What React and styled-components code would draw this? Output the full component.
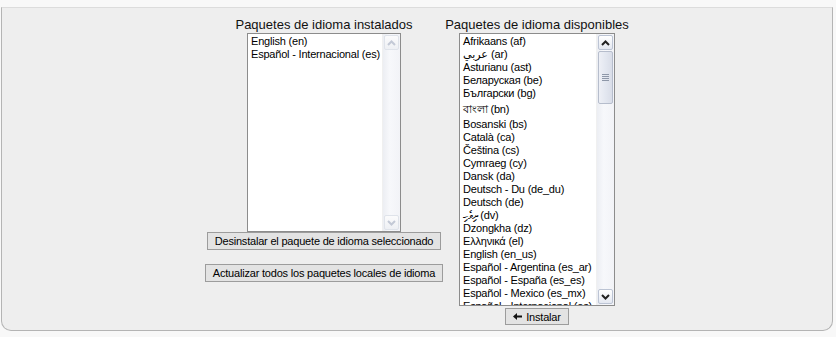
import React from "react";
import styled, { createGlobalStyle } from "styled-components";

const GlobalStyle = createGlobalStyle`
    html, body {
        margin: 0;
        padding: 0;
        background: #f8f8f8;
    }
    body {
        font-family: "Liberation Sans", Arial, "Noto Sans", "DejaVu Sans", sans-serif;
        color: #000;
    }
`

const Page = styled.div`
    padding: 7px 3px 4px 1px;
`

const Panel = styled.div`
    background: #eeeeee;
    border: 1px solid #b4b4b4;
    border-top-color: #dcdcdc;
    border-radius: 0 0 10px 10px;
    height: 324px;
    box-sizing: border-box;
    display: flex;
    justify-content: center;
    align-items: flex-start;
    padding-top: 9px;
`

const Column = styled.div`
    width: ${p => p.$width}px;
    display: flex;
    flex-direction: column;
    align-items: center;
`

const Heading = styled.div`
    font-size: 13px;
    line-height: 16px;
    height: 16px;
    color: #111;
    white-space: nowrap;
`

const ListBox = styled.div`
    width: ${p => p.$width}px;
    height: ${p => p.$height}px;
    box-sizing: border-box;
    border: 1px solid #8c8c8c;
    background: #fff;
    display: flex;
    overflow: hidden;
`

const Items = styled.div`
    flex: 1;
    overflow: hidden;
    padding: 1px 0 0 3px;
`

const Item = styled.div`
    font-size: 11px;
    letter-spacing: -0.2px;
    line-height: ${p => p.$tall ? 18 : 13}px;
    height: ${p => p.$tall ? 18 : 13}px;
    white-space: nowrap;
`

const ScrollBar = styled.div`
    width: 17px;
    flex: none;
    display: flex;
    flex-direction: column;
    background: linear-gradient(to right, #eceef3, #f7f8fb 40%, #f2f3f7);
    border-left: 1px solid #f0f0f0;
`

const ScrollButton = styled.div`
    width: 15px;
    height: 15px;
    margin: 1px 0 1px 1px;
    box-sizing: border-box;
    border: 1px solid ${p => p.$disabled ? "#dfe3ea" : "#bcc4d4"};
    border-radius: 2px;
    background: ${p => p.$disabled
        ? "linear-gradient(#fbfbfc, #eef0f4)"
        : "linear-gradient(#ffffff, #e4e8f1)"};
    display: flex;
    align-items: center;
    justify-content: center;
`

const Track = styled.div`
    flex: 1;
`

const Thumb = styled.div`
    width: 15px;
    margin: ${p => p.$top}px 0 0 1px;
    height: ${p => p.$height}px;
    box-sizing: border-box;
    border: 1px solid #b6bdcc;
    border-radius: 2px;
    background: linear-gradient(to right, #eef0f6, #e3e7f0 50%, #d9dde8);
    display: flex;
    align-items: center;
    justify-content: center;
`

const Grip = styled.div`
    width: 7px;
    height: 7px;
    background: repeating-linear-gradient(#8e97a8 0 1px, transparent 1px 2px);
`

const Button = styled.button`
    font-family: inherit;
    font-size: 11px;
    letter-spacing: -0.2px;
    color: #000;
    background: #e3e3e3;
    border: 1px solid #9c9c9c;
    border-radius: 0;
    padding: 0 7px;
    height: ${p => p.$height || 18}px;
    margin-top: ${p => p.$gap}px;
    white-space: nowrap;
    display: flex;
    align-items: center;
    gap: 4px;
    cursor: pointer;
`

const Arrow = ({ up, disabled }) => (
    <svg width="9" height="6" viewBox="0 0 9 6">
        <path
            d={up ? "M1 5 L4.5 1.5 L8 5" : "M1 1 L4.5 4.5 L8 1"}
            fill="none"
            stroke={disabled ? "#c3c9d6" : "#222"}
            strokeWidth="2"
        />
    </svg>
)

const Scroller = ({ disabled, thumbTop, thumbHeight }) => (
    <ScrollBar>
        <ScrollButton $disabled={disabled}><Arrow up disabled={disabled} /></ScrollButton>
        <Track>
            {!disabled && (
                <Thumb $top={thumbTop} $height={thumbHeight}><Grip /></Thumb>
            )}
        </Track>
        <ScrollButton $disabled={disabled}><Arrow disabled={disabled} /></ScrollButton>
    </ScrollBar>
)

const installed = ["English (en)", "Español - Internacional (es)"]

const available = [
    "Afrikaans (af)",
    "عربي (ar)",
    "Asturianu (ast)",
    "Беларуская (be)",
    "Български (bg)",
    { text: "বাংলা (bn)", tall: true },
    "Bosanski (bs)",
    "Català (ca)",
    "Čeština (cs)",
    "Cymraeg (cy)",
    "Dansk (da)",
    "Deutsch - Du (de_du)",
    "Deutsch (de)",
    "ދިވެހި (dv)",
    "Dzongkha (dz)",
    "Ελληνικά (el)",
    "English (en_us)",
    "Español - Argentina (es_ar)",
    "Español - España (es_es)",
    "Español - Mexico (es_mx)",
    "Español - Internacional (es)",
]

const InstallIcon = () => (
    <svg width="9" height="7" viewBox="0 0 9 7">
        <path d="M0 3.5 L4 0 L4 7 Z" fill="#111" />
        <rect x="4" y="2.5" width="5" height="2" fill="#111" />
    </svg>
)

export default function App() {
    return (
        <>
            <GlobalStyle />
            <Page>
                <Panel>
                    <Column $width={240}>
                        <Heading>Paquetes de idioma instalados</Heading>
                        <ListBox $width={154} $height={199}>
                            <Items>
                                {installed.map(x => <Item key={x}>{x}</Item>)}
                            </Items>
                            <Scroller disabled />
                        </ListBox>
                        <Button $gap={0}>Desinstalar el paquete de idioma seleccionado</Button>
                        <Button $gap={14}>Actualizar todos los paquetes locales de idioma</Button>
                    </Column>
                    <Column $width={186}>
                        <Heading>Paquetes de idioma disponibles</Heading>
                        <ListBox $width={156} $height={273}>
                            <Items>
                                {available.map(x => typeof x === "string"
                                    ? <Item key={x}>{x}</Item>
                                    : <Item key={x.text} $tall={x.tall}>{x.text}</Item>)}
                            </Items>
                            <Scroller thumbTop={0} thumbHeight={53} />
                        </ListBox>
                        <Button $gap={2} $height={17}><InstallIcon />Instalar</Button>
                    </Column>
                </Panel>
            </Page>
        </>
    )
}
